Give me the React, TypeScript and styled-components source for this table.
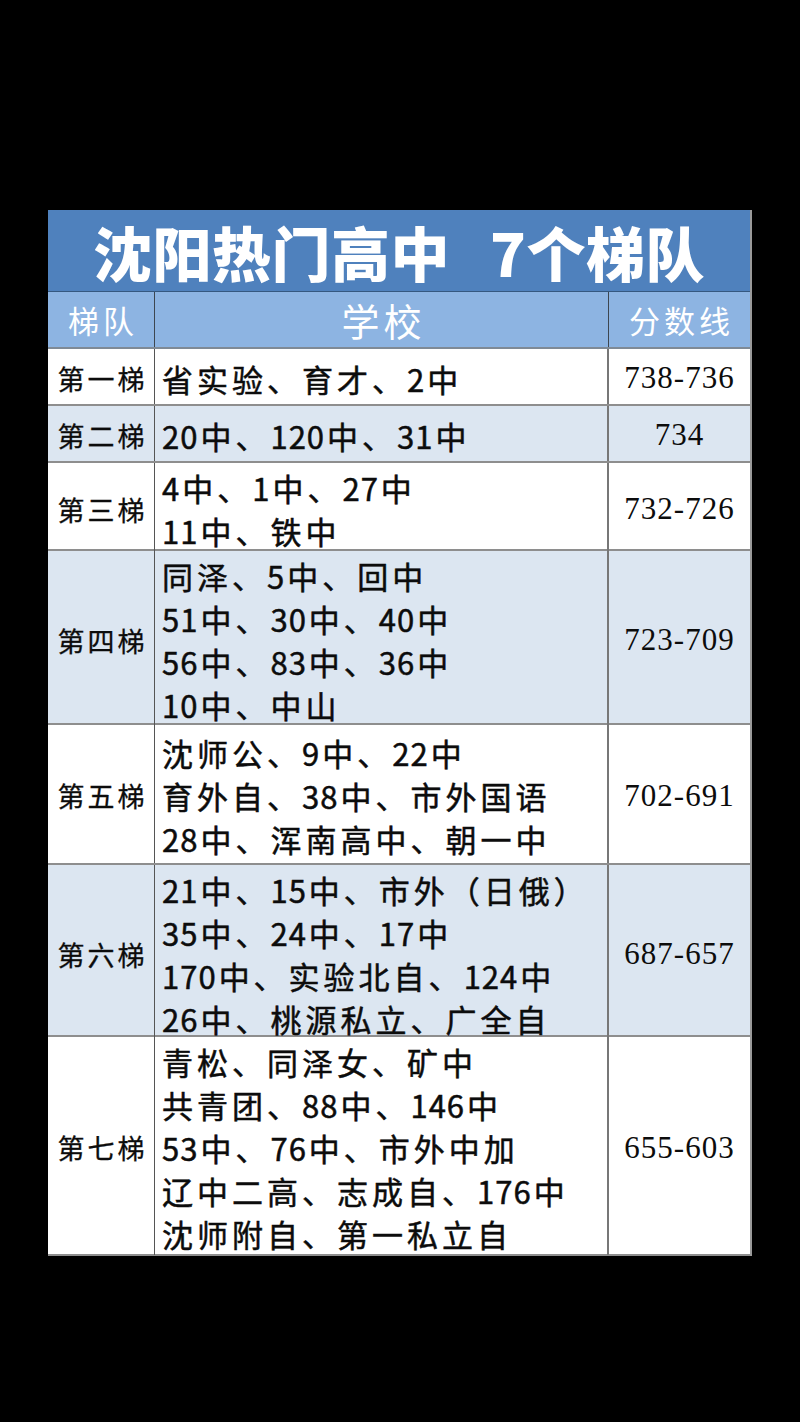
import React from 'react'
import { styled, createGlobalStyle } from 'styled-components'

type Tier = {
    name: string;
    schools: string[];
    score: string;
    height: number;
}

const tiers: Tier[] = [
    { name: '第一梯', schools: ['省实验、育才、2中'], score: '738-736', height: 57 },
    { name: '第二梯', schools: ['20中、120中、31中'], score: '734', height: 57 },
    { name: '第三梯', schools: ['4中、1中、27中', '11中、铁中'], score: '732-726', height: 88 },
    {
        name: '第四梯',
        schools: ['同泽、5中、回中', '51中、30中、40中', '56中、83中、36中', '10中、中山'],
        score: '723-709',
        height: 174,
    },
    {
        name: '第五梯',
        schools: ['沈师公、9中、22中', '育外自、38中、市外国语', '28中、浑南高中、朝一中'],
        score: '702-691',
        height: 140,
    },
    {
        name: '第六梯',
        schools: ['21中、15中、市外（日俄）', '35中、24中、17中', '170中、实验北自、124中', '26中、桃源私立、广全自'],
        score: '687-657',
        height: 172,
    },
    {
        name: '第七梯',
        schools: ['青松、同泽女、矿中', '共青团、88中、146中', '53中、76中、市外中加', '辽中二高、志成自、176中', '沈师附自、第一私立自'],
        score: '655-603',
        height: 219,
    },
]

const GlobalStyle = createGlobalStyle`
    html, body {
        margin: 0;
        padding: 0;
        background: #000;
    }
    body {
        font-family: "Noto Sans CJK SC", "Noto Sans", sans-serif;
        min-height: 1422px;
    }
`

// digits sit tighter than the CJK glyphs in the source sheet
const renderLine = (text: string) =>
    text.split(/(\d+)/).map((part, i) =>
        /^\d+$/.test(part) ? <Num key={i}>{part}</Num> : <span key={i}>{part}</span>
    )

const App = () => {
    return (
        <>
            <GlobalStyle />
            <Page>
                <Table>
                    <Title>沈阳热门高中<Gap />7个梯队</Title>
                    <HeadRow>
                        <HeadCell>梯队</HeadCell>
                        <HeadCell $big>学校</HeadCell>
                        <HeadCell $last>分数线</HeadCell>
                    </HeadRow>
                    {tiers.map((t, i) => (
                        <Row key={t.name} $height={t.height} $alt={i % 2 === 1}>
                            <TierCell>{t.name}</TierCell>
                            <SchoolCell>
                                {t.schools.map(s => (
                                    <SchoolLine key={s}>{renderLine(s)}</SchoolLine>
                                ))}
                            </SchoolCell>
                            <ScoreCell>{t.score}</ScoreCell>
                        </Row>
                    ))}
                </Table>
            </Page>
        </>
    )
}

export default App

const Page = styled.div`
    padding: 210px 0 0 48px;
    height: 1212px;
    background: #000;
`

const Table = styled.div`
    width: 704px;
    box-sizing: border-box;
    border-right: 2px solid #9a9a9a;
    background: #fff;
`

const Title = styled.div`
    height: 82px;
    box-sizing: border-box;
    background: #4f81bd;
    border-bottom: 1px solid #35587f;
    color: #fff;
    font-size: 59px;
    font-weight: 900;
    display: flex;
    align-items: center;
    justify-content: center;
    letter-spacing: 0.5px;
    padding-top: 2px;
`

const Gap = styled.span`
    display: inline-block;
    width: 40px;
`

const HeadRow = styled.div`
    display: grid;
    grid-template-columns: 107px 454px 1fr;
    height: 57px;
    box-sizing: border-box;
    background: #8db4e2;
    border-bottom: 2px solid #7f8a96;
`

const HeadCell = styled.div<{ $big?: boolean; $last?: boolean }>`
    display: flex;
    align-items: center;
    justify-content: center;
    color: #fff;
    font-size: ${p => (p.$big ? '38px' : '31px')};
    letter-spacing: 4px;
    padding-left: 4px;
    border-right: ${p => (p.$last ? 'none' : '1px solid #3d4650')};
`

const Row = styled.div<{ $height: number; $alt: boolean }>`
    display: grid;
    grid-template-columns: 107px 454px 1fr;
    height: ${p => p.$height}px;
    box-sizing: border-box;
    background: ${p => (p.$alt ? '#dce6f1' : '#fff')};
    border-bottom: 2px solid #8e8e8e;
    color: #0c0c0c;
`

const TierCell = styled.div`
    display: flex;
    align-items: center;
    justify-content: center;
    font-size: 27px;
    letter-spacing: 3px;
    -webkit-text-stroke: 0.3px #0c0c0c;
    padding-left: 3px;
    padding-top: 3px;
    border-right: 1px solid #555;
`

const SchoolCell = styled.div`
    display: flex;
    flex-direction: column;
    justify-content: center;
    padding-left: 7px;
    padding-top: 3px;
    border-right: 2px solid #777;
`

const SchoolLine = styled.div`
    font-size: 31px;
    letter-spacing: 4px;
    line-height: 43px;
    white-space: nowrap;
    -webkit-text-stroke: 0.5px #0c0c0c;
`

const Num = styled.span`
    letter-spacing: 1px;
    margin-right: 2px;
`

const ScoreCell = styled.div`
    display: flex;
    align-items: center;
    justify-content: center;
    font-family: "Liberation Serif", "Times New Roman", serif;
    font-size: 31px;
    letter-spacing: 1px;
    padding-top: 3px;
`
